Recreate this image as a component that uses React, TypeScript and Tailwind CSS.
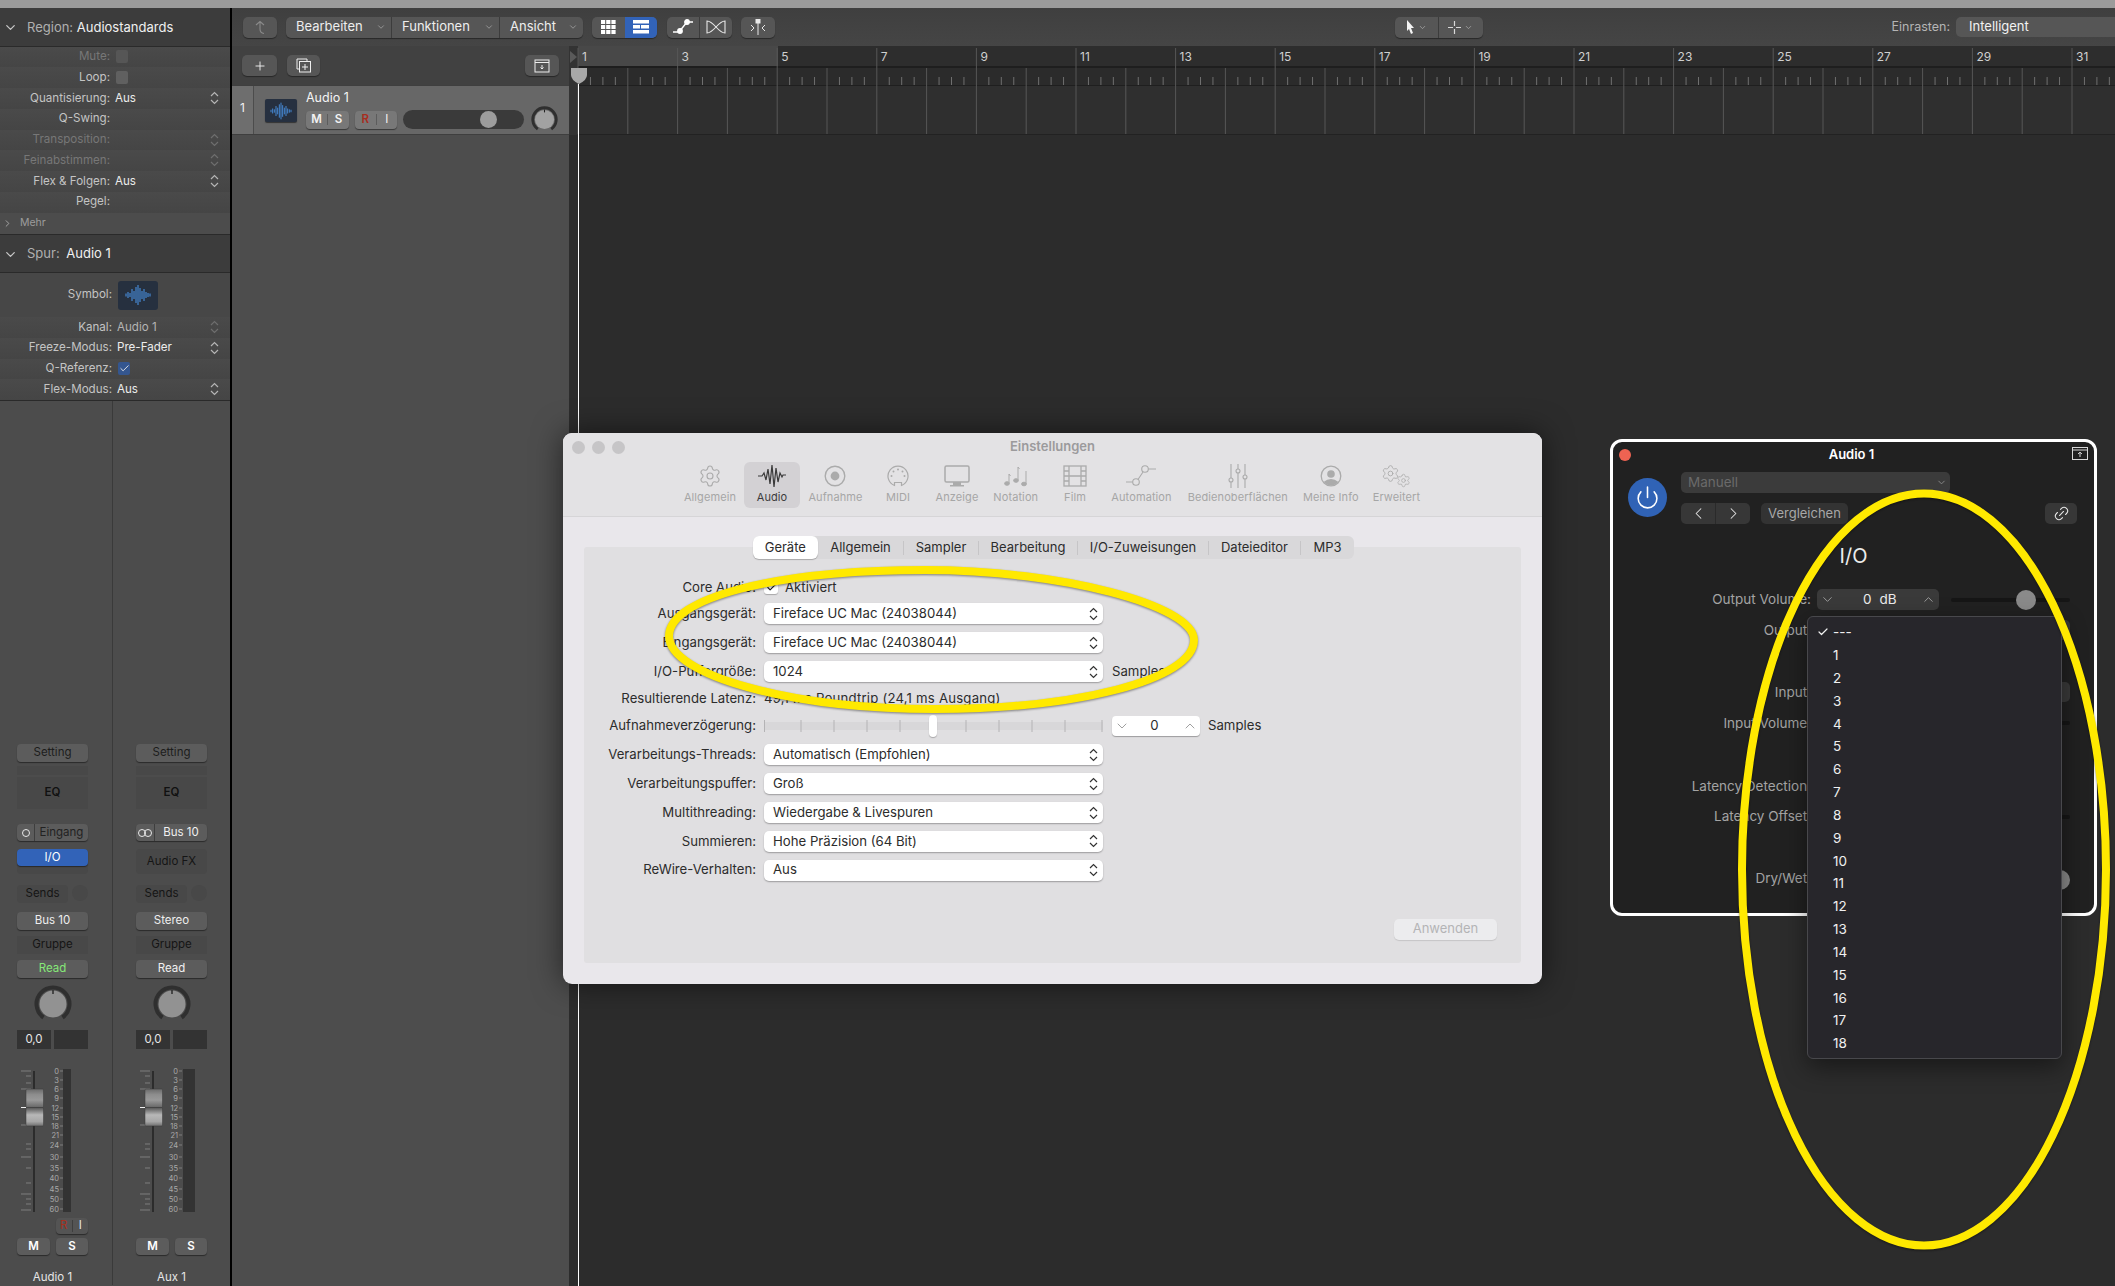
import React from "react";
import { ChevronDown, ChevronUp, ChevronLeft, ChevronRight, ChevronRight as Chev, Check, Plus, Settings, Link2, Power } from "lucide-react";

const cx = (...a: (string | undefined | false)[]) => a.filter(Boolean).join(" ");

const UpDown = ({ dim = false, dark = false }: { dim?: boolean; dark?: boolean }) => (
  <svg width="9" height="14" viewBox="0 0 9 14" fill="none" stroke={dark ? "#333" : dim ? "#6e6e6e" : "#b5b5b5"} strokeWidth="1.2">
    <path d="M1 5 L4.5 1.5 L8 5" />
    <path d="M1 9 L4.5 12.5 L8 9" />
  </svg>
);

const Wave = ({ w, h, sw = 1 }: { w: number; h: number; sw?: number }) => {
  const bars = [1.5, 3, 2, 6, 4, 8, 10, 7, 4, 6, 3, 2, 1.5];
  return (
    <svg width={w} height={h} viewBox="0 0 28 24" stroke="#4b97ee" strokeWidth={sw}>
      {bars.map((b, i) => (
        <line key={i} x1={2 + i * 2} x2={2 + i * 2} y1={12 - b} y2={12 + b} />
      ))}
    </svg>
  );
};

const Row = ({ label, value, dim, soft, stepper, w = 110 }: { label: string; value?: string; dim?: boolean; soft?: boolean; stepper?: boolean; w?: number }) => (
  <div className="relative flex h-[20.75px] items-center bg-gradient-to-b from-[#4a4a4a] to-[#454545] text-[11.6px] leading-none">
    <div className={cx("text-right", dim ? "text-[#777777]" : "text-[#c4c4c4]")} style={{ width: w }}>{label}</div>
    {value && <div className={cx("ml-[5px]", soft ? "text-[#b4b4b4]" : dim ? "text-[#8f8f8f]" : "text-[#ececec]")}>{value}</div>}
    {stepper && (
      <div className="absolute left-[210px] top-[3px]"><UpDown dim={dim || soft} /></div>
    )}
  </div>
);

const CheckRow = ({ label, checked, dim, w = 110 }: { label: string; checked?: boolean; dim?: boolean; w?: number }) => (
  <div className="flex h-[20.75px] items-center bg-gradient-to-b from-[#4a4a4a] to-[#454545] text-[11.6px] leading-none">
    <div className={cx("text-right", dim ? "text-[#777777]" : "text-[#c4c4c4]")} style={{ width: w }}>{label}</div>
    <div className={cx("ml-[6px] flex h-[13px] w-[12px] items-center justify-center rounded-[2px]", checked ? "bg-[#34568f]" : dim ? "bg-[#565656]" : "bg-[#606060]")}>
      {checked && <Check size={11} color="#e8e8e8" strokeWidth={2} />}
    </div>
  </div>
);

const Inspector = () => (
  <div className="w-[230px] shrink-0 bg-[#4c4c4c]">
    <div className="flex h-[38.5px] items-center gap-[9px] border-b border-[#2a2a2a] bg-[#3c3c3c] pl-[3px] pt-[1px] text-[13px]">
      <ChevronDown size={15} color="#c8c8c8" />
      <div><span className="text-[#b0b0b0]">Region: </span><span className="text-[#f0f0f0]">Audiostandards</span></div>
    </div>
    <CheckRow label="Mute:" dim />
    <CheckRow label="Loop:" />
    <Row label="Quantisierung:" value="Aus" stepper />
    <Row label="Q-Swing:" />
    <Row label="Transposition:" dim stepper />
    <Row label="Feinabstimmen:" dim stepper />
    <Row label="Flex & Folgen:" value="Aus" stepper />
    <Row label="Pegel:" />
    <div className="flex h-[21.5px] items-center gap-[7px] pl-[2px] text-[10.5px] text-[#9c9c9c]">
      <Chev size={11} color="#aaaaaa" /><span>Mehr</span>
    </div>
    <div className="flex h-[39px] items-center gap-[9px] border-y border-[#2a2a2a] bg-[#3c3c3c] pl-[3px] pt-[1px] text-[13px]">
      <ChevronDown size={15} color="#c8c8c8" />
      <div><span className="text-[#b0b0b0]">Spur: </span><span className="ml-[3px] text-[#f0f0f0]">Audio 1</span></div>
    </div>
    <div className="flex h-[44px] items-center bg-[#474747] text-[11.6px]">
      <div className="w-[112px] text-right text-[#c4c4c4]">Symbol:</div>
      <div className="ml-[6px] flex h-[29px] w-[40px] items-center justify-center rounded-[3px] bg-[#26303f]"><Wave w={32} h={24} /></div>
    </div>
    <Row label="Kanal:" value="Audio 1" soft stepper w={112} />
    <Row label="Freeze-Modus:" value="Pre-Fader" stepper w={112} />
    <CheckRow label="Q-Referenz:" checked w={112} />
    <Row label="Flex-Modus:" value="Aus" stepper w={112} />
    <div className="h-px bg-[#2a2a2a]" />
    <div className="flex">
      <Strip name="Audio 1" first />
      <Strip name="Aux 1" />
    </div>
  </div>
);

const Knob = ({ size = 38, tick = "#2c2c2c", inner = 13.5, fill = "#929292" }: { size?: number; tick?: string; inner?: number; fill?: string }) => (
  <svg width={size} height={size} viewBox="0 0 38 38" fill="none">
    <path d="M9.5 32.5 A16.5 16.5 0 1 1 28.5 32.5" stroke="#2f2f2f" strokeWidth="4" />
    <circle cx="19" cy="19" r={inner} fill={fill} />
    <line x1="19" x2="19" y1="5" y2="9" stroke={tick} strokeWidth="1.5" />
  </svg>
);

const faderY = [2, 11, 20, 29, 39, 48, 57, 66, 76, 88, 99, 109, 120, 130, 140];
const faderL = ["0", "3", "6", "9", "12", "15", "18", "21", "24", "30", "35", "40", "45", "50", "60"];

const Fader = ({ aux }: { aux?: boolean }) => (
  <svg width="71" height="149" viewBox="0 -3 71 149" className="-mt-[3px] block shrink-0">
    <defs>
      <linearGradient id={aux ? "capb" : "capa"} x1="0" x2="0" y1="0" y2="1">
        <stop offset="0" stopColor="#6a6a6a" /><stop offset="0.15" stopColor="#8d8d8d" /><stop offset="0.3" stopColor="#999999" />
        <stop offset="0.48" stopColor="#6b6b6b" /><stop offset="0.52" stopColor="#5e5e5e" /><stop offset="0.7" stopColor="#b8b8b8" />
        <stop offset="0.88" stopColor="#a6a6a6" /><stop offset="1" stopColor="#6f6f6f" />
      </linearGradient>
    </defs>
    {[2, 7, 14, 20, 26, 38, 56, 75, 80, 88, 99, 114, 125, 130, 135, 141].map((y, i) => (
      <line key={i} x1={i % 3 === 0 ? 4 : 9} x2="14" y1={y} y2={y} stroke="#8c8c8c" strokeWidth="0.8" />
    ))}
    <rect x="16" y="2" width="2" height="141" fill="#2c2c2c" />
    {faderL.map((l, i) => (
      <g key={l}>
        <text x="42" y={faderY[i] + 2.6} textAnchor="end" fontSize="7.5" fill="#a9a9a9">{l}</text>
        <line x1="43" x2="46" y1={faderY[i]} y2={faderY[i]} stroke="#8c8c8c" strokeWidth="0.8" />
      </g>
    ))}
    <rect x={aux ? 47 : 46} y="0" width={aux ? 12 : 8} height="143" fill="#333333" />
    <rect x="9" y="20" width="17.5" height="37" rx="1" fill={`url(#${aux ? "capb" : "capa"})`} stroke="#3a3a3a" strokeWidth="0.5" />
    <line x1="4" x2="9" y1="38.5" y2="38.5" stroke="#f0f0f0" />
    <line x1="9" x2="26" y1="38.5" y2="38.5" stroke="#444444" />
  </svg>
);

const SBtn = ({ className, children }: { className?: string; children?: React.ReactNode }) => (
  <div className={cx("flex items-center justify-center rounded-[4px] bg-[#5c5c5c] text-[11.5px] leading-none shadow-[0_1px_1px_rgba(0,0,0,0.45)]", className)}>{children}</div>
);

const Strip = ({ name, first }: { name: string; first?: boolean }) => (
  <div className={cx("flex h-[884px] flex-col", first ? "w-[112.5px] border-r border-[#3a3a3a] pl-[17px]" : "w-[117.5px] pl-[23.5px]")}>
    <div className="w-[71px]">
      <SBtn className="mt-[343px] h-[18px] text-[#1c1c1c]">Setting</SBtn>
      <div className="mt-[4px] h-[9px] bg-[#484848]" />
      <div className="mt-[2px] flex h-[32px] items-center justify-center bg-[#484848] text-[11.5px] font-semibold text-[#111111]">EQ</div>
      <SBtn className="mt-[15px] h-[17px]">
        {first ? (
          <>
            <div className="flex h-full w-[18px] items-center justify-center border-r border-[#3e3e3e]"><div className="h-[8px] w-[8px] rounded-full border border-[#e8e8e8]" /></div>
            <div className="flex-1 text-center text-[#222222]">Eingang</div>
          </>
        ) : (
          <>
            <div className="flex h-full w-[19px] items-center justify-center border-r border-[#3e3e3e]">
              <div className="h-[8px] w-[8px] rounded-full border border-[#e8e8e8]" />
              <div className="-ml-[2px] h-[8px] w-[8px] rounded-full border border-[#e8e8e8]" />
            </div>
            <div className="flex-1 text-center text-[#f0f0f0]">Bus 10</div>
          </>
        )}
      </SBtn>
      {first ? (
        <div className="mt-[8px] h-[25px] rounded-[4px] bg-[#484848]">
          <SBtn className="h-[17px] bg-[#3263b8] text-white">I/O</SBtn>
        </div>
      ) : (
        <div className="mt-[8px] flex h-[25px] items-center justify-center rounded-[4px] bg-[#484848] text-[11.5px] text-[#151515]">Audio FX</div>
      )}
      <div className="mt-[11px] flex h-[18px] gap-[4px]">
        <div className="flex w-[51px] items-center justify-center rounded-[4px] bg-[#484848] text-[11.5px] text-[#151515]">Sends</div>
        <div className="h-[16px] w-[16px] rounded-full bg-[#484848]" />
      </div>
      <SBtn className="mt-[9px] h-[18px] text-[#eeeeee]">{first ? "Bus 10" : "Stereo"}</SBtn>
      <div className="mt-[6px] flex h-[18px] items-center justify-center bg-[#484848] text-[11.5px] text-[#151515]">Gruppe</div>
      <SBtn className={cx("mt-[6px] h-[18px]", first ? "text-[#86e878]" : "text-[#f0f0f0]")}>Read</SBtn>
      <div className="mt-[7px] flex h-[38px] justify-center"><Knob /></div>
      <div className="mt-[7px] flex h-[19px] gap-[3px]">
        <div className="flex w-[34px] items-center justify-center bg-[#333333] text-[11.5px] text-[#e6e6e6]">0,0</div>
        <div className="w-[34px] bg-[#333333]" />
      </div>
      <div className="mt-[20px] flex h-[143px] items-start"><Fader aux={!first} /></div>
      <div className="mt-[6px] flex h-[16px] justify-end">
        {first && (
          <SBtn className="w-[32px] bg-[#545454]">
            <div className="flex-1 text-center text-[#a8301f]">R</div>
            <div className="flex-1 border-l border-[#3e3e3e] text-center text-[#e6e6e6]">I</div>
          </SBtn>
        )}
      </div>
      <div className="mt-[4px] flex h-[17px] justify-between">
        <SBtn className="w-[33px] font-semibold text-white">M</SBtn>
        <SBtn className="w-[32px] font-semibold text-white">S</SBtn>
      </div>
      <div className="mt-[15px] text-center text-[11.5px] leading-[14px] text-[#e6e6e6]">{name}</div>
    </div>
  </div>
);

const TBtn = ({ className, children }: { className?: string; children?: React.ReactNode }) => (
  <div className={cx("flex items-center justify-center rounded-[5px] bg-[#565656] shadow-[0_1px_1px_rgba(0,0,0,0.4)]", className)}>{children}</div>
);

const Menu = ({ label, w, end }: { label: string; w: number; end?: boolean }) => (
  <div className={cx("flex h-full items-center pl-[10px] text-[13px] text-[#eeeeee]", !end && "border-r border-[#3c3c3c]")} style={{ width: w }}>
    <span>{label}</span>
    <ChevronDown size={10} color="#a0a0a0" className="ml-auto mr-[5px]" />
  </div>
);

const Toolbar = () => (
  <div className="relative flex h-[38px] items-center bg-gradient-to-b from-[#3f3f3f] to-[#454545] pl-[11px]">
    <TBtn className="h-[21px] w-[34px] bg-[#4b4b4b]">
      <svg width="14" height="15" viewBox="0 0 14 15" fill="none" stroke="#8a8a8a" strokeWidth="1.1"><path d="M3 5 L7 1.5 L11 5 M7 2 V9 Q7 13 11 13.5" /></svg>
    </TBtn>
    <TBtn className="ml-[9px] h-[21px] w-[297px]">
      <Menu label="Bearbeiten" w={106} />
      <Menu label="Funktionen" w={108} />
      <Menu label="Ansicht" w={83} end />
    </TBtn>
    <TBtn className="ml-[9px] h-[21px] w-[65px] overflow-hidden">
      <div className="flex h-full w-[33px] items-center justify-center">
        <svg width="15" height="14" viewBox="0 0 15 14" fill="#ffffff">
          {[0, 1, 2].flatMap((r) => [0, 1, 2].map((c) => <rect key={`${r}${c}`} x={c * 5.2} y={r * 5} width="4.2" height="4" />))}
        </svg>
      </div>
      <div className="flex h-full flex-1 items-center justify-center bg-[#3263b8]">
        <svg width="16" height="14" viewBox="0 0 16 14" fill="#ffffff">
          <rect x="0" y="0" width="16" height="3.5" /><rect x="0" y="5" width="7" height="3.5" /><rect x="8" y="5" width="8" height="3.5" /><rect x="0" y="10" width="16" height="3.5" />
        </svg>
      </div>
    </TBtn>
    <TBtn className="ml-[10px] h-[21px] w-[65px]">
      <div className="flex h-full w-[33px] items-center justify-center border-r border-[#3c3c3c]">
        <svg width="20" height="16" viewBox="0 0 20 16" stroke="#ffffff" strokeWidth="1.4" fill="#ffffff"><path d="M0 13 H6 L14 3 H20" fill="none" /><circle cx="7" cy="12" r="2.2" /><circle cx="14" cy="3" r="2.2" /></svg>
      </div>
      <div className="flex flex-1 items-center justify-center">
        <svg width="20" height="14" viewBox="0 0 20 14" stroke="#e8e8e8" strokeWidth="1.1" fill="none"><path d="M1 1 C8 1 12 13 19 13 V1 C12 1 8 13 1 13 Z" /></svg>
      </div>
    </TBtn>
    <TBtn className="ml-[9px] h-[21px] w-[34px]">
      <svg width="18" height="16" viewBox="0 0 18 16" stroke="#e8e8e8" strokeWidth="1" fill="none"><rect x="7" y="0" width="4" height="4" fill="#e8e8e8" /><path d="M9 4 V16 M2 6 L5 9 L2 12 M16 6 L13 9 L16 12" /></svg>
    </TBtn>
    <TBtn className="ml-[619.5px] h-[21px] w-[88px]">
      <div className="flex h-full w-[44px] items-center justify-center gap-[3px] border-r border-[#3c3c3c]">
        <svg width="9" height="14" viewBox="0 0 9 14" fill="#f4f4f4"><path d="M1 0 L8 8 H5 L7 13 L5 14 L3 9 L1 11 Z" /></svg>
        <ChevronDown size={9} color="#aaaaaa" />
      </div>
      <div className="flex flex-1 items-center justify-center gap-[3px]">
        <svg width="13" height="13" viewBox="0 0 13 13" stroke="#d8d8d8" strokeWidth="1.2"><path d="M6.5 0 V5 M6.5 8 V13 M0 6.5 H5 M8 6.5 H13" /></svg>
        <ChevronDown size={9} color="#aaaaaa" />
      </div>
    </TBtn>
    <div className="ml-[409px] text-[12.5px] text-[#b5b5b5]">Einrasten:</div>
    <div className="ml-[6px] flex h-[20px] flex-1 items-center rounded-l-[5px] bg-[#565656] pl-[13px] text-[13px] text-[#f2f2f2]">Intelligent</div>
  </div>
);

const TrackList = () => (
  <div className="w-[337px] shrink-0 bg-[#4d4d4d]">
    <div className="flex h-[39px] items-center justify-between bg-[#414141] pl-[10px] pr-[10px]">
      <div className="flex gap-[10px]">
        <TBtn className="h-[21px] w-[35px]"><Plus size={14} color="#f0f0f0" strokeWidth={1.6} /></TBtn>
        <TBtn className="h-[21px] w-[33px]">
          <svg width="16" height="15" viewBox="0 0 16 15" fill="none" stroke="#eeeeee" strokeWidth="1"><path d="M3 11 H1 V1 H11 V3" /><rect x="3.5" y="3.5" width="11" height="10.5" /><path d="M9 6 V12 M6 9 H12" /></svg>
        </TBtn>
      </div>
      <TBtn className="h-[21px] w-[34px]">
        <svg width="16" height="14" viewBox="0 0 16 14" fill="none" stroke="#eeeeee" strokeWidth="1"><rect x="1" y="1" width="14" height="12" /><path d="M1 3.5 H15 M8 6 V10 M6.5 8.5 L8 10 L9.5 8.5" /></svg>
      </TBtn>
    </div>
    <div className="flex h-[50px] border-y border-[#3f3f3f] bg-[#676767]">
      <div className="flex w-[22px] items-center justify-center border-r border-[#4c4c4c] bg-[#6e6e6e] pb-[4px] text-[12px] text-[#f2f2f2]">1</div>
      <div className="ml-[11px] mt-[13px] flex h-[23px] w-[32px] items-center justify-center rounded-[2px] bg-[#263040] shadow-[0_1px_1px_rgba(0,0,0,0.5)]"><Wave w={26} h={20} /></div>
      <div className="ml-[9px] flex flex-col">
        <div className="mt-[4px] text-[12.5px] leading-[16px] text-[#f4f4f4]">Audio 1</div>
        <div className="mt-0 flex h-[27px] items-center">
          <SBtn className="h-[18px] w-[43px] bg-[#787878] font-semibold text-[#f2f2f2]">
            <div className="flex-1 text-center">M</div><div className="flex-1 border-l border-[#5c5c5c] text-center">S</div>
          </SBtn>
          <SBtn className="ml-[6px] h-[18px] w-[42px] bg-[#787878]">
            <div className="flex-1 text-center font-semibold text-[#a92d1e]">R</div><div className="flex-1 border-l border-[#5c5c5c] text-center text-[#f2f2f2]">I</div>
          </SBtn>
          <div className="relative ml-[6px] h-[19px] w-[121px] rounded-full bg-[#3a3a3a]">
            <div className="absolute left-[77px] top-[1px] h-[17px] w-[17px] rounded-full bg-[#9d9d9d]" />
          </div>
          <div className="ml-[7px] h-[27px]"><Knob size={27} tick="#222222" inner={13.5} fill="#a2a2a2" /></div>
        </div>
      </div>
    </div>
  </div>
);

const bars = Array.from({ length: 32 }, (_, i) => i);
const Arrange = () => {
  const X = (b: number) => 9 + 49.8 * b;
  return (
    <div className="relative flex-1 overflow-hidden bg-[#2c2c2c]">
      <svg width="1546" height="89" viewBox="0 0 1546 89" className="block">
        <rect x="0" y="0" width="1546" height="20" fill="#2d2d2d" />
        <rect x="9" y="0" width="200" height="20" fill="#484848" />
        <rect x="0" y="20" width="1546" height="2" fill="#1e1e1e" />
        <rect x="0" y="22" width="1546" height="17" fill="#2b2b2b" />
        <rect x="0" y="39" width="1546" height="1" fill="#1f1f1f" />
        <rect x="0" y="40" width="1546" height="49" fill="#2f2f2f" />
        <rect x="0" y="88" width="1546" height="1" fill="#222222" />
        <rect x="0" y="0" width="9" height="89" fill="#333333" />
        {bars.map((b) => (
          <g key={b}>
            <line x1={X(b)} x2={X(b)} y1={b % 2 === 0 ? 2 : 22} y2="88" stroke="#575757" strokeWidth="1" />
            {[1, 2, 3].map((q) => (
              <line key={q} x1={X(b) + q * 12.45} x2={X(b) + q * 12.45} y1="31" y2="39" stroke="#6f6f6f" strokeWidth="1" />
            ))}
            {b % 2 === 0 && (
              <text x={X(b) + 4} y="19" dy="-4" fontSize="12" fill="#d0d0d0" fontFamily="Inter, sans-serif">{b + 1}</text>
            )}
          </g>
        ))}
        <path d="M1 5 L8 11 L1 17 Z" fill="#5a5a5a" />
      </svg>
      <div className="absolute bottom-0 left-[9px] top-[38px] w-px bg-white" />
      <svg width="18" height="17" viewBox="0 0 18 17" className="absolute left-[1px] top-[21px]"><path d="M1 1 H17 V8 Q17 13 9 17 Q1 13 1 8 Z" fill="#a8a8a8" /></svg>
    </div>
  );
};

const G = "#ababab";
const icons: Record<string, React.ReactNode> = {
  Allgemein: <Settings size={24} color={G} strokeWidth={1.1} />,
  Audio: (
    <svg width="28" height="26" viewBox="0 0 28 26" fill="none" stroke="#3a3a3a" strokeWidth="1.2"><path d="M0 13 H4 L6 10 L8 17 L10 6 L12 21 L14 2 L16 24 L18 5 L20 19 L22 10 L24 14 L25 12 H28" /></svg>
  ),
  Aufnahme: (
    <svg width="22" height="22" viewBox="0 0 22 22" fill="none"><circle cx="11" cy="11" r="9.8" stroke={G} strokeWidth="1.4" /><circle cx="11" cy="11" r="4.4" fill={G} /></svg>
  ),
  MIDI: (
    <svg width="22" height="22" viewBox="0 0 22 22" fill="none"><path d="M7.5 20.5 A10 10 0 1 1 14.5 20.5 V17.5 H7.5 Z" stroke={G} strokeWidth="1.2" /><g fill={G}><circle cx="4.5" cy="11" r="1" /><circle cx="6.5" cy="6.5" r="1" /><circle cx="11" cy="4.5" r="1" /><circle cx="15.5" cy="6.5" r="1" /><circle cx="17.5" cy="11" r="1" /></g></svg>
  ),
  Anzeige: (
    <svg width="26" height="22" viewBox="0 0 26 22" fill="none"><rect x="1" y="1" width="24" height="16" rx="1.5" stroke={G} strokeWidth="1.5" /><path d="M9 17 H17 V20 H20 V21.5 H6 V20 H9 Z" fill={G} /></svg>
  ),
  Notation: (
    <svg width="24" height="22" viewBox="0 0 24 22" fill={G} stroke={G} strokeWidth="1"><g><ellipse cx="3" cy="18.5" rx="2.4" ry="1.8" /><path d="M5 18 V9 L6.5 11" fill="none" /><ellipse cx="12" cy="15.5" rx="2.4" ry="1.8" /><path d="M14 15 V2 L15.5 4" fill="none" /><ellipse cx="20" cy="19" rx="2.4" ry="1.8" /><path d="M22 19 V6" fill="none" /></g></svg>
  ),
  Film: (
    <svg width="24" height="22" viewBox="0 0 24 22" fill="none" stroke={G} strokeWidth="1.3"><rect x="1" y="1" width="22" height="20" /><path d="M6 1 V21 M18 1 V21 M6 11 H18 M1 6 H6 M1 11 H6 M1 16 H6 M18 6 H23 M18 11 H23 M18 16 H23" /></svg>
  ),
  Automation: (
    <svg width="30" height="22" viewBox="0 0 30 22" fill="none" stroke={G} strokeWidth="1.1"><circle cx="10" cy="17" r="3.3" /><circle cx="19" cy="4" r="3.3" /><path d="M0 17 H6.7 M12 14.5 L17 7 M22.3 4 H30" /></svg>
  ),
  "Bedienoberflächen": (
    <svg width="20" height="24" viewBox="0 0 20 24" fill="none" stroke={G} strokeWidth="1.1"><path d="M3 0 V24 M10 0 V24 M17 0 V24" /><g fill="#e3e2e4"><circle cx="3" cy="16" r="2" /><circle cx="10" cy="7" r="2" /><circle cx="17" cy="13" r="2" /></g></svg>
  ),
  "Meine Info": (
    <svg width="22" height="22" viewBox="0 0 22 22" fill="none"><circle cx="11" cy="11" r="9.8" stroke={G} strokeWidth="1.3" /><circle cx="11" cy="9" r="3.8" fill={G} /><path d="M3.5 17 Q11 11 18.5 17 Q11 24 3.5 17 Z" fill={G} /></svg>
  ),
  Erweitert: (
    <div className="relative h-[24px] w-[30px]">
      <Settings size={19} color={G} strokeWidth={1.1} className="absolute left-0 top-0" />
      <Settings size={15} color={G} strokeWidth={1.2} className="absolute bottom-0 right-0" />
    </div>
  ),
};

const prefs: [string, number][] = [
  ["Allgemein", 62], ["Audio", 62], ["Aufnahme", 65], ["MIDI", 60], ["Anzeige", 58], ["Notation", 59.5],
  ["Film", 59], ["Automation", 74], ["Bedienoberflächen", 118.6], ["Meine Info", 67.4], ["Erweitert", 64],
];

const Select = ({ value }: { value: string }) => (
  <div className="flex h-[21px] w-[339px] items-center justify-between rounded-[5px] bg-white pl-[9px] pr-[5px] text-[13.2px] text-[#2c2c2c] shadow-[0_1px_1.5px_rgba(0,0,0,0.3)]">
    <span>{value}</span><UpDown dark />
  </div>
);

const FormRow = ({ label, h = 29, children }: { label: string; h?: number; children?: React.ReactNode }) => (
  <div className="flex items-center" style={{ height: h }}>
    <div className="w-[172px] whitespace-nowrap text-right text-[13.2px] text-[#2c2c2c]">{label}</div>
    <div className="ml-[8px] flex items-center text-[13.2px] text-[#2c2c2c]">{children}</div>
  </div>
);

const tabs: [string, number][] = [["Geräte", 65.4], ["Allgemein", 85], ["Sampler", 75], ["Bearbeitung", 99], ["I/O-Zuweisungen", 131], ["Dateieditor", 92], ["MP3", 54]];

const SettingsWindow = () => (
  <div className="absolute left-[563px] top-[433px] h-[551px] w-[979px] rounded-[9px] bg-[#e9e7eb] shadow-[0_0_30px_rgba(0,0,0,0.55)]">
    <div className="relative h-[84px] rounded-t-[9px] border-b border-[#d6d5d7] bg-[#e3e2e4]">
      <div className="absolute left-[9px] top-[8px] flex gap-[7px]">
        <div className="h-[13px] w-[13px] rounded-full bg-[#c6c5c7]" />
        <div className="h-[13px] w-[13px] rounded-full bg-[#c6c5c7]" />
        <div className="h-[13px] w-[13px] rounded-full bg-[#c6c5c7]" />
      </div>
      <div className="pt-[5px] text-center text-[13px] font-semibold leading-[16px] text-[#9b9a9c]">Einstellungen</div>
      <div className="ml-[116px] mt-[8px] flex">
        {prefs.map(([n, w]) => (
          <div key={n} className="flex flex-col items-center" style={{ width: w }}>
            <div className={cx("flex h-[46px] flex-col items-center rounded-[6px] px-[4px]", n === "Audio" && "w-[56px] bg-[#d3d1d4]")}>
              <div className="flex h-[28px] items-center justify-center">{icons[n]}</div>
              <div className={cx("whitespace-nowrap text-[11px] leading-[14px] tracking-[0.1px]", n === "Audio" ? "text-[#3c3c3c]" : "text-[#a6a6a6]")}>{n}</div>
            </div>
          </div>
        ))}
      </div>
    </div>
    <div className="relative mx-[21px] mt-[30px] h-[416px] rounded-[3px] bg-[#e0dfe1] pl-0 pt-[29px]">
      <div className="absolute -top-[11px] left-[168.6px] flex h-[23px] items-center rounded-[6px] bg-[#d9d8da] text-[13px] text-[#2c2c2c]">
        {tabs.map(([t, w], i) => (
          <div key={t} className={cx("flex h-full items-center justify-center", i === 0 ? "rounded-[6px] bg-white shadow-[0_1px_1px_rgba(0,0,0,0.25)]" : "")} style={{ width: w }}>
            {i > 1 && <div className="mr-auto h-[14px] w-px bg-[#c6c5c7]" />}
            <span className={cx(i > 1 && "mr-auto")}>{t}</span>
          </div>
        ))}
      </div>
      <FormRow label="Core Audio:" h={23}>
        <div className="flex h-[14px] w-[14px] items-center justify-center rounded-[3px] bg-white shadow-[0_1px_1px_rgba(0,0,0,0.25)]"><Check size={11} color="#222222" strokeWidth={2.4} /></div>
        <span className="ml-[7px]">Aktiviert</span>
      </FormRow>
      <FormRow label="Ausgangsgerät:"><Select value="Fireface UC Mac (24038044)" /></FormRow>
      <FormRow label="Eingangsgerät:"><Select value="Fireface UC Mac (24038044)" /></FormRow>
      <FormRow label="I/O-Puffergröße:" h={29.5}><Select value="1024" /><span className="ml-[9px]">Samples</span></FormRow>
      <FormRow label="Resultierende Latenz:" h={25}><span className="tracking-[0.2px]">49,1 ms Roundtrip (24,1 ms Ausgang)</span></FormRow>
      <FormRow label="Aufnahmeverzögerung:" h={28.5}>
        <div className="relative flex h-[22px] w-[339px] items-center">
          <div className="h-[8px] w-full bg-[#d8d7d9]" />
          <svg width="339" height="12" viewBox="0 0 339 12" className="absolute left-0 top-[5px]" stroke="#b4b3b5">
            {[0.5, 37, 70, 103, 136, 202, 235, 268, 301, 338].map((x) => <line key={x} x1={x} x2={x} y1="0" y2="12" />)}
          </svg>
          <div className="absolute left-[165px] top-0 h-[22px] w-[8px] rounded-full bg-white shadow-[0_1px_1px_rgba(0,0,0,0.25)]" />
        </div>
        <div className="ml-[9px] flex h-[20px] w-[88px] items-center justify-between rounded-[4px] bg-white px-[2px] shadow-[0_1px_1px_rgba(0,0,0,0.3)]">
          <ChevronDown size={16} color="#999999" strokeWidth={1.4} /><span className="pr-[3px]">0</span><ChevronUp size={16} color="#999999" strokeWidth={1.4} />
        </div>
        <span className="ml-[8px]">Samples</span>
      </FormRow>
      <FormRow label="Verarbeitungs-Threads:" h={29.2}><Select value="Automatisch (Empfohlen)" /></FormRow>
      <FormRow label="Verarbeitungspuffer:" h={28.9}><Select value="Groß" /></FormRow>
      <FormRow label="Multithreading:" h={28.9}><Select value="Wiedergabe & Livespuren" /></FormRow>
      <FormRow label="Summieren:" h={28.9}><Select value="Hohe Präzision (64 Bit)" /></FormRow>
      <FormRow label="ReWire-Verhalten:" h={28.9}><Select value="Aus" /></FormRow>
      <div className="absolute left-[810px] top-[371.5px] flex h-[21px] w-[103px] items-center justify-center rounded-[5px] bg-[#ececee] text-[13px] text-[#b4b4b6] shadow-[0_1px_1px_rgba(0,0,0,0.12)]">Anwenden</div>
    </div>
  </div>
);

const PLabel = ({ t, h = 20, mt }: { t: string; h?: number; mt: number }) => (
  <div className="flex items-center" style={{ height: h, marginTop: mt }}>
    <div className="w-[198px] whitespace-nowrap text-right text-[13.5px] text-[#a4a4a4]">{t}</div>
    <div className="flex-1" />
  </div>
);

const PluginWindow = () => (
  <div className="absolute left-[1610px] top-[439px] h-[477px] w-[487px] rounded-[12px] border-[3px] border-white bg-[#212121]">
    <div className="relative flex h-[26px] items-center justify-center pr-[4px] text-[13px] font-semibold text-white">
      <div className="absolute left-[6px] top-[7px] h-[12px] w-[12px] rounded-full bg-[#ee6352]" />
      Audio 1
      <svg width="16" height="13" viewBox="0 0 16 13" fill="none" stroke="#d8d8d8" strokeWidth="1" className="absolute left-[459px] top-[5px]"><rect x="0.5" y="0.5" width="15" height="12" /><path d="M0.5 3 H15.5 M8 10 V5.5 M6 7 L8 5.2 L10 7" /></svg>
    </div>
    <div className="ml-[15px] mt-[4px] flex w-[450px]">
      <div className="mt-[6px] flex h-[39px] w-[39px] items-center justify-center rounded-full bg-[#3063b6]"><Power size={25} color="#ffffff" strokeWidth={1.5} /></div>
      <div className="ml-[14px] flex-1">
        <div className="flex h-[21px] w-[269px] items-center justify-between rounded-[5px] bg-[#3b3b3b] pl-[7px] pr-[3px] text-[13.5px] text-[#6a6a6a]">
          <span>Manuell</span><ChevronDown size={11} color="#8a8a8a" />
        </div>
        <div className="mt-[10px] flex h-[21px]">
          <div className="flex w-[69px] rounded-[5px] bg-[#373737]">
            <div className="flex flex-1 items-center justify-center border-r border-[#2a2a2a]"><ChevronLeft size={19} color="#e6e6e6" strokeWidth={1.3} /></div>
            <div className="flex flex-1 items-center justify-center"><ChevronRight size={19} color="#e6e6e6" strokeWidth={1.3} /></div>
          </div>
          <div className="ml-[11px] flex w-[87px] items-center justify-center rounded-[5px] bg-[#333333] text-[13px] text-[#a8a8a8]">Vergleichen</div>
          <div className="ml-auto mr-[1px] flex w-[32px] items-center justify-center rounded-[5px] bg-[#373737]"><Link2 size={17} color="#e6e6e6" strokeWidth={1.5} className="-rotate-45" /></div>
        </div>
      </div>
    </div>
    <div className="mt-[19px] h-[26px] pl-0 text-center text-[20px] leading-[26px] text-[#ececec]">I/O</div>
    <div className="relative mt-[20px] flex h-[21px] items-center">
      <div className="w-[198px] whitespace-nowrap text-right text-[13.5px] text-[#a4a4a4]">Output Volume:</div>
      <div className="ml-[6px] flex h-[21px] w-[122px] items-center rounded-[5px] bg-[#3a3a3a] px-[3px] text-[13.5px] text-[#ececec]">
        <ChevronDown size={15} color="#9a9a9a" strokeWidth={1.6} />
        <span className="ml-[28px]">0</span><span className="ml-[8px]">dB</span>
        <ChevronUp size={15} color="#9a9a9a" strokeWidth={1.6} className="ml-auto" />
      </div>
      <div className="relative ml-[12px] h-[4px] w-[119px] rounded-full bg-[#161616]">
        <div className="absolute -top-[8px] left-[65px] h-[20px] w-[20px] rounded-full bg-[#8a8a8a]" />
      </div>
    </div>
    <PLabel t="Output:" mt={10} />
    <PLabel t="Input:" mt={42} />
    <PLabel t="Input Volume:" mt={11} />
    <PLabel t="Latency Detection:" mt={43} />
    <PLabel t="Latency Offset:" mt={10} />
    <PLabel t="Dry/Wet:" mt={42} />
    <div className="absolute left-[204px] top-[178px] h-[20px] w-[253px] rounded-[5px] bg-[#3a3a3a]" />
    <div className="absolute left-[204px] top-[240px] h-[20px] w-[253px] rounded-[5px] bg-[#3a3a3a]" />
    <div className="absolute left-[338px] top-[279px] h-[4px] w-[119px] rounded-full bg-[#161616]" />
    <div className="absolute left-[338px] top-[373px] h-[4px] w-[119px] rounded-full bg-[#161616]" />
    <div className="absolute left-[437px] top-[428px] h-[20px] w-[20px] rounded-full bg-[#8a8a8a]" />
  </div>
);

const PopupMenu = () => (
  <div className="absolute left-[1807px] top-[616px] h-[443px] w-[255px] rounded-[6px] border border-[#48484c] bg-[#27262b] pt-[4px] text-[13.5px] text-[#f0f0f0] shadow-[0_8px_24px_rgba(0,0,0,0.45)]">
    {["---", ...Array.from({ length: 18 }, (_, i) => String(i + 1))].map((t, i) => (
      <div key={t} className="relative flex h-[22.83px] items-center pl-[25px]">
        {i === 0 && <Check size={12} color="#f0f0f0" strokeWidth={2.4} className="absolute left-[9px]" />}
        {t}
      </div>
    ))}
  </div>
);

const Ellipses = () => (
  <svg width="2115" height="1286" viewBox="0 0 2115 1286" fill="none" className="pointer-events-none absolute left-0 top-0" style={{ filter: "drop-shadow(0 1px 1px rgba(0,0,0,0.45))" }}>
    <path d="M669 636 C669 598 775 570 925 570 C1060 570 1194 605 1194 640 C1194 680 1075 709 935 709 C790 709 669 675 669 636 Z" stroke="#ffe900" strokeWidth="8" />
    <ellipse cx="1924" cy="869.5" rx="182" ry="376" stroke="#ffe900" strokeWidth="8" />
  </svg>
);

export default function App() {
  return (
    <div className="relative flex h-[1286px] w-[2115px] flex-col overflow-hidden bg-[#2c2c2c] font-[Inter,sans-serif]">
      <div className="h-[8px] shrink-0 bg-[#9b9b9b]" />
      <div className="flex flex-1 overflow-hidden">
        <Inspector />
        <div className="w-[2px] shrink-0 bg-black" />
        <div className="flex flex-1 flex-col">
          <Toolbar />
          <div className="flex flex-1">
            <TrackList />
            <Arrange />
          </div>
        </div>
      </div>
      <SettingsWindow />
      <PluginWindow />
      <PopupMenu />
      <Ellipses />
    </div>
  );
}
